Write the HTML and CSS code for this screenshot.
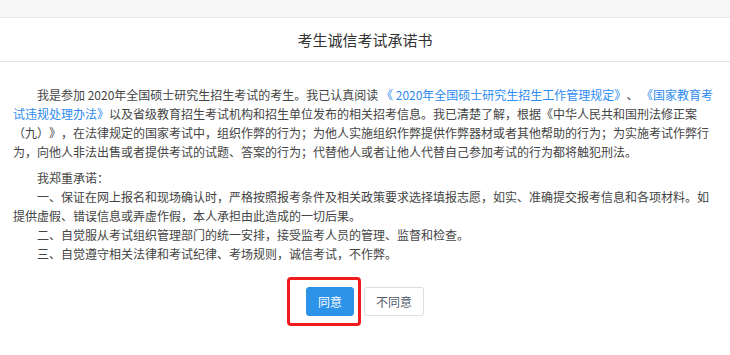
FILE: index.html
```html
<!DOCTYPE html>
<html lang="zh-CN">
<head>
<meta charset="utf-8">
<title>考生诚信考试承诺书</title>
<link rel="stylesheet" href="styles.css">
</head>
<body>
<div class="topbar"></div>
<div class="header">考生诚信考试承诺书</div>
<div class="content">
  <p class="para indent">我是参加 2020年全国硕士研究生招生考试的考生。我已认真阅读 <span class="link">《 2020年全国硕士研究生招生工作管理规定》</span>、 <span class="link">《国家教育考试违规处理办法》</span>以及省级教育招生考试机构和招生单位发布的相关招考信息。我已清楚了解，根据《中华人民共和国刑法修正案（九）》，在法律规定的国家考试中，组织作弊的行为；为他人实施组织作弊提供作弊器材或者其他帮助的行为；为实施考试作弊行为，向他人非法出售或者提供考试的试题、答案的行为；代替他人或者让他人代替自己参加考试的行为都将触犯刑法。</p>
  <div class="promise">
    <p class="line indent">我郑重承诺：</p>
    <p class="line indent">一、保证在网上报名和现场确认时，严格按照报考条件及相关政策要求选择填报志愿，如实、准确提交报考信息和各项材料。如提供虚假、错误信息或弄虚作假，本人承担由此造成的一切后果。</p>
    <p class="line indent">二、自觉服从考试组织管理部门的统一安排，接受监考人员的管理、监督和检查。</p>
    <p class="line indent">三、自觉遵守相关法律和考试纪律、考场规则，诚信考试，不作弊。</p>
  </div>
</div>
<div class="actions">
  <span class="agree-wrap">
    <button class="btn btn-primary">同意</button>
    <span class="highlight"></span>
  </span>
  <button class="btn btn-default">不同意</button>
</div>
</body>
</html>
```
FILE: styles.css
```css
html, body {
  margin: 0;
  padding: 0;
  background: #ffffff;
}
body {
  font-family: "Noto Sans CJK SC", "Microsoft YaHei", sans-serif;
  color: #444;
  width: 730px;
  height: 355px;
  overflow: hidden;
  text-spacing-trim: space-all;
}
.topbar {
  height: 17px;
  background: #f7f7f7;
  border-bottom: 1px solid #e6e6e6;
}
.header {
  height: 43px;
  line-height: 43px;
  text-align: center;
  font-size: 15px;
  color: #333;
  border-bottom: 1px solid #e3e3e3;
}
.content {
  padding: 23px 13px 0 13px;
  font-size: 12px;
  line-height: 19px;
}
.para {
  margin: 0 0 7px 0;
}
.promise .line {
  margin: 0;
}
.indent {
  text-indent: 24px;
}
.link {
  color: #2d8cf0;
}
.actions {
  display: flex;
  justify-content: center;
  gap: 10px;
  margin-top: 24px;
}
.agree-wrap {
  position: relative;
  display: inline-flex;
}
.btn {
  font-family: "Noto Sans CJK SC", "Microsoft YaHei", sans-serif;
  font-size: 12px;
  height: 29px;
  padding: 0 11px;
  border-radius: 3px;
  border: 1px solid transparent;
  cursor: pointer;
  line-height: 27px;
}
.btn-primary {
  background: #2d93e8;
  border-color: #2d93e8;
  color: #fff;
}
.btn-default {
  background: #fff;
  border-color: #dcdee2;
  color: #515a6e;
}
.highlight {
  position: absolute;
  left: -19px;
  top: -10px;
  width: 74px;
  height: 49px;
  box-sizing: border-box;
  border: 3px solid #f21a1a;
  border-radius: 4px;
  pointer-events: none;
}
```
